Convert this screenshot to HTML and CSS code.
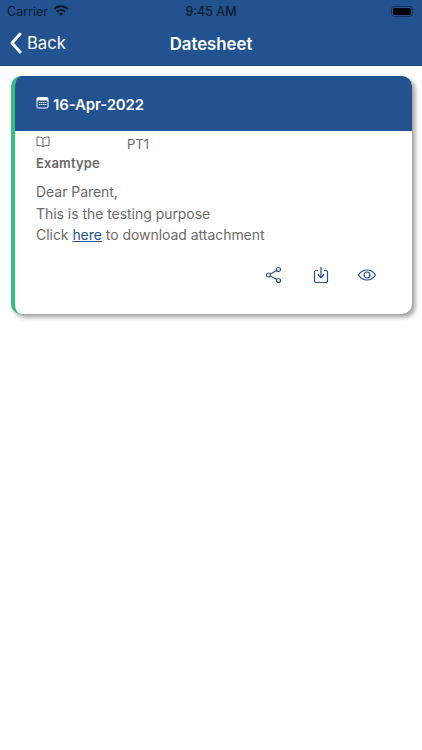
FILE: index.html
```html
<!DOCTYPE html>
<html lang="en">
<head>
    <meta charset="UTF-8">
    <meta name="viewport" content="width=device-width, initial-scale=1.0">
    <title>Datesheet</title>
    <link rel="stylesheet" href="styles.css">
</head>
<body>
    <div class="topbar">
        <div class="status-bar">
            <div class="status-left">
                <span>Carrier</span>
                <svg class="wifi" width="16" height="12" viewBox="0 0 16 12">
                    <path d="M8 2.2c2.4 0 4.6.9 6.2 2.5l1.2-1.3C13.500 1.400 10.900.3 8 .3S2.500 1.400.6 3.400l1.200 1.300C3.400 3.100 5.600 2.200 8 2.200z"/>
                    <path d="M8 5.900c1.400 0 2.700.5 3.600 1.500l1.300-1.300C11.600 4.800 9.900 4 8 4s-3.600.8-4.900 2.100l1.300 1.300c.9-1 2.200-1.500 3.600-1.500z"/>
                    <path d="M8 7.700c-.9 0-1.700.4-2.300.9L8 11l2.300-2.400c-.6-.5-1.400-.9-2.300-.9z"/>
                </svg>
            </div>
            <span class="status-time">9:45 AM</span>
            <div class="battery"><div class="battery-level"></div></div>
        </div>
        <div class="nav-bar">
            <a class="back" href="#">
                <svg width="13" height="22" viewBox="0 0 13 22">
                    <path d="M11 2 L3 11 L11 20" fill="none" stroke="#fff" stroke-width="3" stroke-linecap="round" stroke-linejoin="round"/>
                </svg>
                <span>Back</span>
            </a>
            <h1>Datesheet</h1>
        </div>
    </div>

    <div class="card">
        <div class="card-head">
            <svg class="calendar" width="13" height="13" viewBox="0 0 13 13">
                <rect x="0.5" y="1" width="12" height="11.500" rx="2" fill="#fff"/>
                <rect x="1.500" y="4.500" width="10" height="7" fill="#22528f"/>
                <path d="M3 6h1.500v1H3zM5 6h1.500v1H5zM7 6h1.500v1H7zM9 6h1.500v1H9zM3 8h1.500v1H3zM5 8h1.500v1H5zM7 8h1.500v1H7zM9 8h1.500v1H9z" fill="#fff"/>
            </svg>
            <span>16-Apr-2022</span>
        </div>
        <div class="card-body">
            <div class="exam-row">
                <div class="exam-label">
                    <svg class="book" width="14" height="12" viewBox="0 0 14 12">
                        <path d="M7 2.500C6 1.300 4 1 1 1v8.500c3 0 5 .3 6 1.500 1-1.200 3-1.500 6-1.500V1c-3 0-5 .3-6 1.500zM7 2.500V11" fill="none" stroke="#666" stroke-width="1"/>
                    </svg>
                    <b>Examtype</b>
                </div>
                <span class="exam-value">PT1</span>
            </div>
            <p class="message">
                Dear Parent,<br>
                This is the testing purpose<br>
                Click <a href="#">here</a> to download attachment
            </p>
            <div class="actions">
                <svg class="share" width="18" height="18" viewBox="0 0 18 18" fill="none" stroke="#22528f" stroke-width="1.200">
                    <circle cx="13.500" cy="3.500" r="2"/>
                    <circle cx="3.500" cy="9" r="2"/>
                    <circle cx="13.500" cy="14.500" r="2"/>
                    <path d="M5.300 8 11.700 4.500M5.300 10l6.400 3.500"/>
                </svg>
                <svg width="18" height="18" viewBox="0 0 18 18" fill="none" stroke="#22528f" stroke-width="1.200">
                    <path d="M6 4.500H4a1.500 1.500 0 0 0-1.500 1.500v9A1.500 1.500 0 0 0 4 16.500h10a1.500 1.500 0 0 0 1.500-1.500V6A1.500 1.500 0 0 0 14 4.500h-2"/>
                    <path d="M9 1v10.500M5.800 8.500 9 11.700l3.200-3.200"/>
                </svg>
                <svg width="20" height="18" viewBox="0 0 20 18" fill="none" stroke="#22528f" stroke-width="1.200">
                    <path d="M1.500 9c2-3.300 4.900-5 8.500-5s6.500 1.700 8.500 5c-2 3.300-4.900 5-8.500 5s-6.500-1.700-8.500-5z"/>
                    <circle cx="10" cy="9" r="3"/>
                </svg>
            </div>
        </div>
    </div>
</body>
</html>
```

FILE: styles.css
```css
* {
    margin: 0;
    padding: 0;
    box-sizing: border-box;
    font-family: Inter, 'Liberation Sans', sans-serif;
}

body {
    background: #fff;
    color: #6a6a6a;
    height: 750px;
    overflow: hidden;
}

.topbar {
    background: #22528f;
    height: 66px;
    border-bottom: 1px solid #1c4476;
}

.status-bar {
    height: 22px;
    padding: 0 9px 0 7px;
    display: flex;
    align-items: center;
    justify-content: space-between;
    position: relative;
    color: #0d1c30;
    font-size: 12.500px;
}

.status-left {
    display: flex;
    align-items: center;
    gap: 5px;
}

.wifi {
    fill: #0b1626;
}

.status-time {
    position: absolute;
    left: 0;
    right: 0;
    text-align: center;
    font-weight: 500;
}

.battery {
    width: 22px;
    height: 11px;
    border: 1px solid #16335a;
    border-radius: 3px;
    padding: 1px;
}

.battery-level {
    height: 100%;
    background: #000;
    border-radius: 1.500px;
}

.nav-bar {
    height: 43px;
    display: flex;
    align-items: center;
    justify-content: center;
    position: relative;
    color: #fff;
}

.nav-bar h1 {
    font-size: 16.800px;
    font-weight: 600;
}

.back {
    position: absolute;
    left: 9px;
    top: 10px;
    display: flex;
    align-items: center;
    gap: 5px;
    color: #fff;
    text-decoration: none;
    font-size: 16.600px;
}

.card {
    margin: 10px 10px 0 11px;
    height: 238px;
    background: #fff;
    border-left: 4px solid #32c083;
    border-radius: 10px;
    box-shadow: 3px 3px 5px rgba(0, 0, 0, 0.4);
    overflow: hidden;
}

.card-head {
    height: 55px;
    background: #22528f;
    color: #fff;
    padding: 1px 0 0 21px;
    display: flex;
    align-items: center;
    gap: 4px;
    font-size: 15px;
    font-weight: 600;
    letter-spacing: -0.01em;
}

.calendar {
    margin-bottom: 3px;
}

.card-body {
    padding: 5px 21px 0;
}

.exam-row {
    display: flex;
    font-size: 13px;
}

.exam-label {
    width: 91px;
    display: flex;
    flex-direction: column;
    align-items: flex-start;
    gap: 7px;
}

.exam-label b {
    font-weight: 600;
    letter-spacing: 0.01em;
}

.exam-value {
    line-height: 17px;
}

.message {
    margin-top: 10px;
    font-size: 14px;
    line-height: 21.500px;
    letter-spacing: -0.003em;
}

.message a {
    color: #22528f;
}

.actions {
    margin: 20px 14px 0 0;
    display: flex;
    justify-content: flex-end;
    gap: 27px;
}

.share {
    margin-right: 2px;
}
```
